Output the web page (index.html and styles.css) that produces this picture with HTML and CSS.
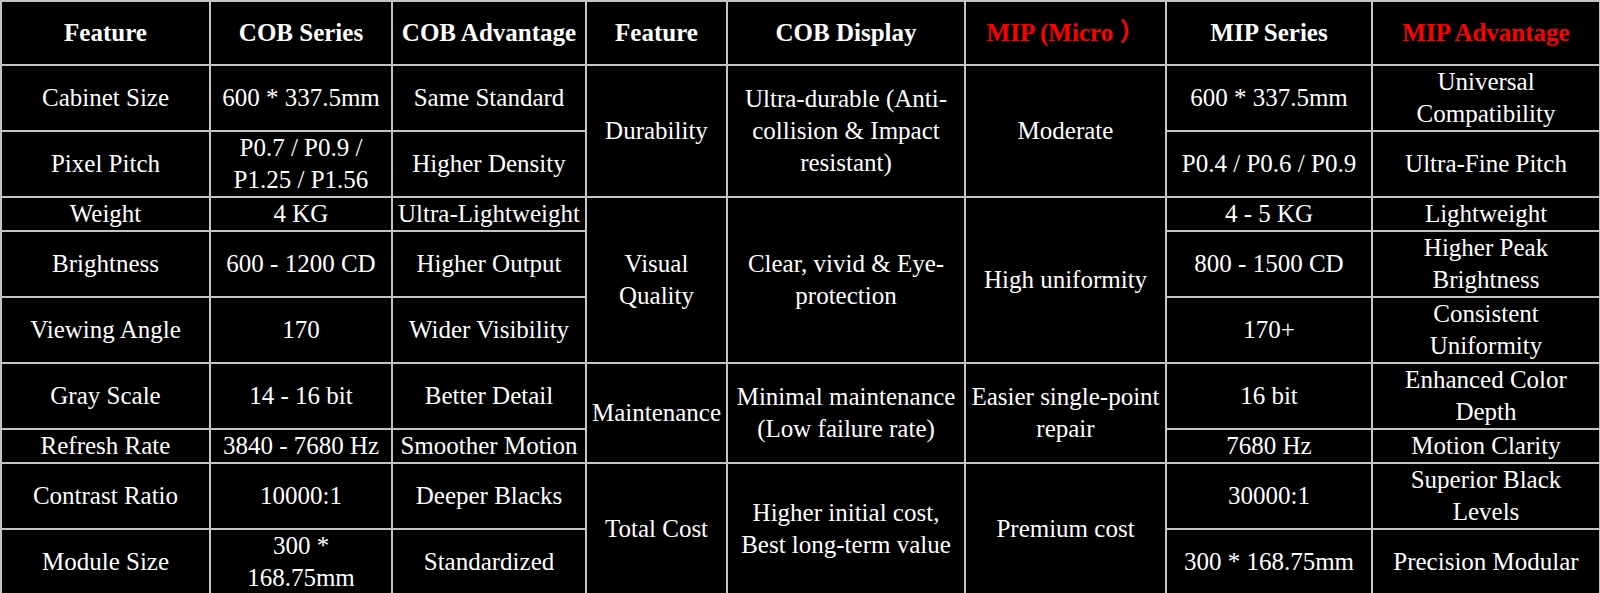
FILE: index.html
```html
<!DOCTYPE html>
<html lang="en">
<head>
<meta charset="utf-8">
<title>COB vs MIP</title>
<link rel="stylesheet" href="styles.css">
</head>
<body>
<table class="cmp">
  <colgroup>
    <col class="c1"><col class="c2"><col class="c3"><col class="c4"><col class="c5"><col class="c6"><col class="c7"><col class="c8">
  </colgroup>
  <thead>
    <tr class="r-head">
      <th>Feature</th>
      <th>COB Series</th>
      <th>COB Advantage</th>
      <th>Feature</th>
      <th>COB Display</th>
      <th class="red">MIP (Micro ）</th>
      <th>MIP Series</th>
      <th class="red">MIP Advantage</th>
    </tr>
  </thead>
  <tbody>
    <tr class="r-tall">
      <td>Cabinet Size</td>
      <td>600 * 337.5mm</td>
      <td>Same Standard</td>
      <td rowspan="2">Durability</td>
      <td rowspan="2">Ultra-durable (Anti-<br>collision &amp; Impact<br>resistant)</td>
      <td rowspan="2">Moderate</td>
      <td>600 * 337.5mm</td>
      <td>Universal<br>Compatibility</td>
    </tr>
    <tr class="r-tall2">
      <td>Pixel Pitch</td>
      <td>P0.7 / P0.9 /<br>P1.25 / P1.56</td>
      <td>Higher Density</td>
      <td>P0.4 / P0.6 / P0.9</td>
      <td>Ultra-Fine Pitch</td>
    </tr>
    <tr class="r-short">
      <td>Weight</td>
      <td>4 KG</td>
      <td>Ultra-Lightweight</td>
      <td rowspan="3">Visual<br>Quality</td>
      <td rowspan="3">Clear, vivid &amp; Eye-<br>protection</td>
      <td rowspan="3">High uniformity</td>
      <td>4 - 5 KG</td>
      <td>Lightweight</td>
    </tr>
    <tr class="r-tall">
      <td>Brightness</td>
      <td>600 - 1200 CD</td>
      <td>Higher Output</td>
      <td>800 - 1500 CD</td>
      <td>Higher Peak<br>Brightness</td>
    </tr>
    <tr class="r-tall2">
      <td>Viewing Angle</td>
      <td>170</td>
      <td>Wider Visibility</td>
      <td>170+</td>
      <td>Consistent<br>Uniformity</td>
    </tr>
    <tr class="r-tall">
      <td>Gray Scale</td>
      <td>14 - 16 bit</td>
      <td>Better Detail</td>
      <td rowspan="2">Maintenance</td>
      <td rowspan="2">Minimal maintenance<br>(Low failure rate)</td>
      <td rowspan="2">Easier single-point<br>repair</td>
      <td>16 bit</td>
      <td>Enhanced Color<br>Depth</td>
    </tr>
    <tr class="r-short">
      <td>Refresh Rate</td>
      <td>3840 - 7680 Hz</td>
      <td>Smoother Motion</td>
      <td>7680 Hz</td>
      <td>Motion Clarity</td>
    </tr>
    <tr class="r-tall">
      <td>Contrast Ratio</td>
      <td>10000:1</td>
      <td>Deeper Blacks</td>
      <td rowspan="2">Total Cost</td>
      <td rowspan="2">Higher initial cost,<br>Best long-term value</td>
      <td rowspan="2">Premium cost</td>
      <td>30000:1</td>
      <td>Superior Black<br>Levels</td>
    </tr>
    <tr class="r-tall">
      <td>Module Size</td>
      <td>300 *<br>168.75mm</td>
      <td>Standardized</td>
      <td>300 * 168.75mm</td>
      <td>Precision Modular</td>
    </tr>
  </tbody>
</table>
</body>
</html>
```
FILE: styles.css
```css
html, body {
  margin: 0;
  padding: 0;
  background: #d4d4d4;
}

.cmp {
  border-collapse: collapse;
  table-layout: fixed;
  width: 1599px;
  background: #000;
  color: #fff;
  font-family: "Liberation Serif", "Noto Sans CJK SC", serif;
  font-size: 25px;
  line-height: 32px;
}

.c1 { width: 209px; }
.c2 { width: 182px; }
.c3 { width: 194px; }
.c4 { width: 141px; }
.c5 { width: 238px; }
.c6 { width: 201px; }
.c7 { width: 206px; }
.c8 { width: 228px; }

.cmp th,
.cmp td {
  border: 2px solid #c4c4c4;
  padding: 0;
  text-align: center;
  vertical-align: middle;
  white-space: nowrap;
}

.cmp th {
  font-weight: bold;
}

.cmp .red {
  color: #ff0000;
}

.r-head { height: 64px; }
.r-tall { height: 66px; }
.r-tall2 { height: 65px; }
.r-short { height: 34px; }
```
